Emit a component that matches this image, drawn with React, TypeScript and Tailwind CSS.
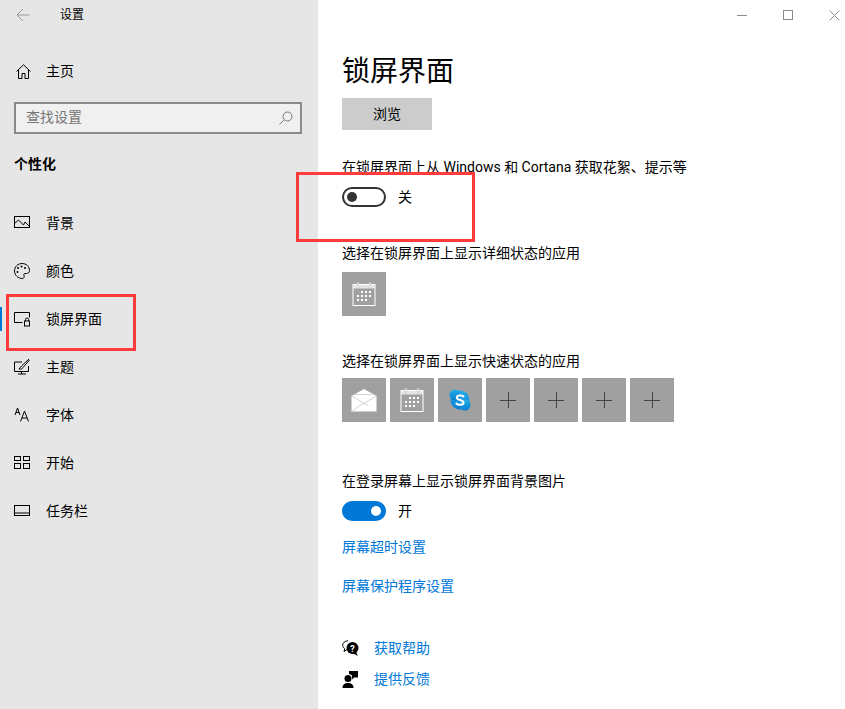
const fontStack = "[font-family:'Roboto','Noto_Sans_CJK_SC',sans-serif]";

const NavIcon = ({ name }: { name: string }) => {
  const common = {
    width: 18,
    height: 18,
    viewBox: "0 0 18 18",
    fill: "none",
    stroke: "#000",
    strokeWidth: 1,
  };
  if (name === "background")
    return (
      <svg {...common}>
        <rect x="0.500" y="2.500" width="15" height="11" />
        <path d="M0.500 9.500 4.500 6l5 5 1.500-3 4.500 4.500" />
      </svg>
    );
  if (name === "color")
    return (
      <svg {...common}>
        <path d="M8 1.500c4.400 0 7.500 3 7.500 7 0 2-1.500 3-3 3H11c-1 0-1.500 1-1 2 .5 1.200 0 3-1.500 3-4 0-8-3-8-7.500C.5 4.500 4 1.500 8 1.500Z" />
        <circle cx="4" cy="6" r="1" fill="#000" stroke="none" />
        <circle cx="7.500" cy="4.500" r="1" fill="#000" stroke="none" />
        <circle cx="11" cy="6" r="1" fill="#000" stroke="none" />
        <circle cx="3.500" cy="10" r="1" fill="#000" stroke="none" />
      </svg>
    );
  if (name === "lock")
    return (
      <svg {...common}>
        <path d="M8.500 12.500H0.500v-10h15v5" />
        <rect x="10.500" y="11" width="5" height="5" />
        <path d="M11.500 11V9.500a1.500 1.500 0 0 1 3 0V11" />
      </svg>
    );
  if (name === "theme")
    return (
      <svg {...common}>
        <path d="M8 4H0.500v9.500h14V8" />
        <path d="M4 16h8M7.500 13.500V16" />
        <path d="M15 1 7.500 8 5 11c2 .5 3.500 0 4-1.500L15.500 2" />
      </svg>
    );
  if (name === "font")
    return (
      <svg {...common}>
        <path d="m1 9 2.500-7L6 9M2 6.500h3" />
        <path d="m6.500 15.500 4-10.500 4 10.500M8 12h5" />
      </svg>
    );
  if (name === "start")
    return (
      <svg {...common}>
        <rect x="0.500" y="2.500" width="6" height="4" />
        <rect x="9.500" y="2.500" width="6" height="4" />
        <rect x="0.500" y="9.500" width="6" height="5" />
        <rect x="9.500" y="9.500" width="6" height="5" />
      </svg>
    );
  return (
    <svg {...common}>
      <rect x="0.500" y="3.500" width="15" height="10" />
      <path d="M0.500 11h15" />
    </svg>
  );
};

const navItems = [
  { label: "背景", icon: "background" },
  { label: "颜色", icon: "color" },
  { label: "锁屏界面", icon: "lock", active: true },
  { label: "主题", icon: "theme" },
  { label: "字体", icon: "font" },
  { label: "开始", icon: "start" },
  { label: "任务栏", icon: "taskbar" },
];

const CalendarIcon = () => (
  <svg width="24" height="24" viewBox="0 0 24 24" fill="none" stroke="#fff">
    <rect x="1" y="2.500" width="22" height="21" strokeWidth="1" />
    <path d="M1 2.500h22v4H1z" fill="#fff" fillOpacity="0.7" strokeWidth="0" />
    <path d="M6 0.500v5M18 0.500v5" strokeWidth="2" stroke="#ddd" />
    <g fill="#fff" stroke="none">
      <rect x="9" y="9" width="2" height="2" />
      <rect x="13" y="9" width="2" height="2" />
      <rect x="17" y="9" width="2" height="2" />
      <rect x="5" y="13" width="2" height="2" />
      <rect x="9" y="13" width="2" height="2" />
      <rect x="13" y="13" width="2" height="2" />
      <rect x="17" y="13" width="2" height="2" />
      <rect x="5" y="17" width="2" height="2" />
      <rect x="9" y="17" width="2" height="2" />
      <rect x="13" y="17" width="2" height="2" />
    </g>
  </svg>
);

const MailIcon = () => (
  <svg width="26" height="24" viewBox="0 0 26 24">
    <path d="M0.500 8 13 1l12.500 7v15.500H0.500Z" fill="#fff" />
    <path d="M0.500 8 17 17.500M25.500 8 9 17.500M0.500 23.500 9 17.500M3.500 6.500 21 6.500" stroke="#d4d4d4" strokeWidth="1" fill="none" />
  </svg>
);

const SkypeIcon = () => (
  <svg width="22" height="22" viewBox="0 0 22 22">
    <defs>
      <linearGradient id="skype" x1="0" y1="0" x2="0" y2="1">
        <stop offset="0" stopColor="#22aee8" />
        <stop offset="1" stopColor="#0a7fd0" />
      </linearGradient>
    </defs>
    <circle cx="11" cy="11" r="9.500" fill="url(#skype)" />
    <circle cx="6" cy="6" r="5.500" fill="url(#skype)" />
    <circle cx="16" cy="16" r="5.500" fill="url(#skype)" />
    <path d="M14.500 7.500C13.500 6.300 8 5.800 7.800 8.500c-.2 3 7 2 6.800 5.300-.2 2.700-5.800 2.400-7.200.7" fill="none" stroke="#fff" strokeWidth="2" strokeLinecap="round" />
  </svg>
);

const PlusIcon = () => (
  <svg width="16" height="16" viewBox="0 0 16 16" stroke="#444" strokeWidth="1">
    <path d="M0 8.500h16M8.500 0v16" />
  </svg>
);

const Tile = ({ children }: { children?: React.ReactNode }) => (
  <div className="flex h-11 w-11 items-center justify-center bg-[#a0a0a0]">
    {children}
  </div>
);

const App = () => {
  return (
    <div className={`relative flex h-[709px] w-[845px] overflow-hidden bg-white text-[14px] text-black ${fontStack}`}>
      <aside className="flex w-[318px] shrink-0 flex-col bg-[#e6e6e6]">
        <div className="flex h-[30px] items-center pl-[16px]">
          <svg width="14" height="14" viewBox="0 0 14 14" fill="none" stroke="#9a9a9a">
            <path d="M13.500 7H1M7 1 1 7l6 6" />
          </svg>
          <span className="ml-[30px] text-[12px] leading-none">设置</span>
        </div>
        <div className="mt-[17px] flex h-[48px] items-center pl-[16px]">
          <svg width="15" height="15" viewBox="0 0 15 15" fill="none" stroke="#000">
            <path d="M0.500 7.500 7.500 0.800l7 6.700M2.500 6v8.500h3.500V9.500h3v5h3.500V6" />
          </svg>
          <span className="ml-[15px] leading-none">主页</span>
        </div>
        <div className="mt-[7px] mr-[16px] ml-[14px] flex h-[32px] items-center justify-between border-2 border-[#8a8a8a] bg-[#f0f0f0] pr-[7px] pl-[10px]">
          <span className="pb-[2px] leading-none text-[#777]">查找设置</span>
          <svg width="14" height="14" viewBox="0 0 14 14" fill="none" stroke="#777">
            <circle cx="8.500" cy="5.500" r="4.500" />
            <path d="M5.500 8.500 0.500 13.500" />
          </svg>
        </div>
        <div className="mt-[20px] pl-[14px] text-[14px] leading-[20px] font-bold">个性化</div>
        <nav className="mt-[25px] flex flex-col">
          {navItems.map((item) => (
            <div className="relative flex h-[48px] items-center pl-[14px]" key={item.label}>
              {item.active && <div className="absolute top-[12px] left-0 h-[24px] w-[2px] bg-[#0078d7]" />}
              <NavIcon name={item.icon} />
              <span className="ml-[14px] leading-none">{item.label}</span>
            </div>
          ))}
        </nav>
      </aside>

      <main className="relative flex-1 pl-[24px]">
        <div className="absolute top-0 -right-3 flex h-[30px] items-center">
          <div className="flex w-[46px] justify-center">
            <div className="h-px w-[10px] bg-[#8c8c8c]" />
          </div>
          <div className="flex w-[46px] justify-center">
            <div className="h-[10px] w-[10px] border border-[#8c8c8c]" />
          </div>
          <div className="flex w-[46px] justify-center">
            <svg width="11" height="11" viewBox="0 0 11 11" stroke="#8c8c8c">
              <path d="M0.500 0.500 10.500 10.500M10.500 0.500 0.500 10.500" />
            </svg>
          </div>
        </div>

        <h1 className="mt-[51px] text-[28px] leading-[42px] font-normal">锁屏界面</h1>
        <button className="mt-[5px] block h-[32px] w-[90px] bg-[#cccccc] leading-none">浏览</button>

        <p className="mt-[27px] leading-[20px]">在锁屏界面上从 Windows 和 Cortana 获取花絮、提示等</p>
        <div className="mt-[8px] flex h-[24px] items-center">
          <div className="flex h-[20px] w-[44px] items-center rounded-full border-2 border-[#333] pl-[3px]">
            <div className="h-[10px] w-[10px] rounded-full bg-[#333]" />
          </div>
          <span className="ml-[12px] leading-none">关</span>
        </div>

        <p className="mt-[34px] leading-[20px]">选择在锁屏界面上显示详细状态的应用</p>
        <div className="mt-[9px] flex">
          <Tile>
            <CalendarIcon />
          </Tile>
        </div>

        <p className="mt-[35px] leading-[20px]">选择在锁屏界面上显示快速状态的应用</p>
        <div className="mt-[7px] flex gap-[4px]">
          <Tile>
            <MailIcon />
          </Tile>
          <Tile>
            <CalendarIcon />
          </Tile>
          <Tile>
            <SkypeIcon />
          </Tile>
          <Tile>
            <PlusIcon />
          </Tile>
          <Tile>
            <PlusIcon />
          </Tile>
          <Tile>
            <PlusIcon />
          </Tile>
          <Tile>
            <PlusIcon />
          </Tile>
        </div>

        <p className="mt-[49px] leading-[20px]">在登录屏幕上显示锁屏界面背景图片</p>
        <div className="mt-[8px] flex h-[24px] items-center">
          <div className="flex h-[20px] w-[44px] items-center justify-end rounded-full bg-[#0078d7] pr-[5px]">
            <div className="h-[10px] w-[10px] rounded-full bg-white" />
          </div>
          <span className="ml-[12px] leading-none">开</span>
        </div>

        <a className="mt-[14px] block leading-[20px] text-[#0078d7]">屏幕超时设置</a>
        <a className="mt-[19px] block leading-[20px] text-[#0078d7]">屏幕保护程序设置</a>

        <div className="mt-[42px] flex h-[20px] items-center">
          <svg width="17" height="17" viewBox="0 0 17 17">
            <path d="M6 0.800C3 0.800 0.700 2.800 0.700 5.300c0 1.500.8 2.700 2 3.500L2 11.500l3-2" fill="none" stroke="#000" />
            <circle cx="10.500" cy="8" r="6" fill="#000" />
            <path d="M14 12.500 16 16l-5-2.500Z" fill="#000" />
            <text x="10.500" y="11.500" fontSize="9" fontWeight="700" textAnchor="middle" fill="#fff">?</text>
          </svg>
          <span className="ml-[15px] leading-none text-[#0078d7]">获取帮助</span>
        </div>
        <div className="mt-[11px] flex h-[20px] items-center">
          <svg width="17" height="17" viewBox="0 0 17 17" fill="#000">
            <circle cx="6" cy="7.500" r="3.500" />
            <path d="M0.500 17c0-3.500 2-5 5.500-5s5.500 1.500 5.500 5Z" />
            <path d="M7 0h9v6.500h-4L10 8.500V4.500A5 5 0 0 0 7 3Z" />
          </svg>
          <span className="ml-[15px] leading-none text-[#0078d7]">提供反馈</span>
        </div>
      </main>

      <div className="absolute top-[172px] left-[296px] h-[70px] w-[179px] border-[3px] border-[#ff3b3b]" />
      <div className="absolute top-[294px] left-[6px] h-[57px] w-[130px] border-[3px] border-[#ff3b3b]" />
    </div>
  );
};

export default App;
